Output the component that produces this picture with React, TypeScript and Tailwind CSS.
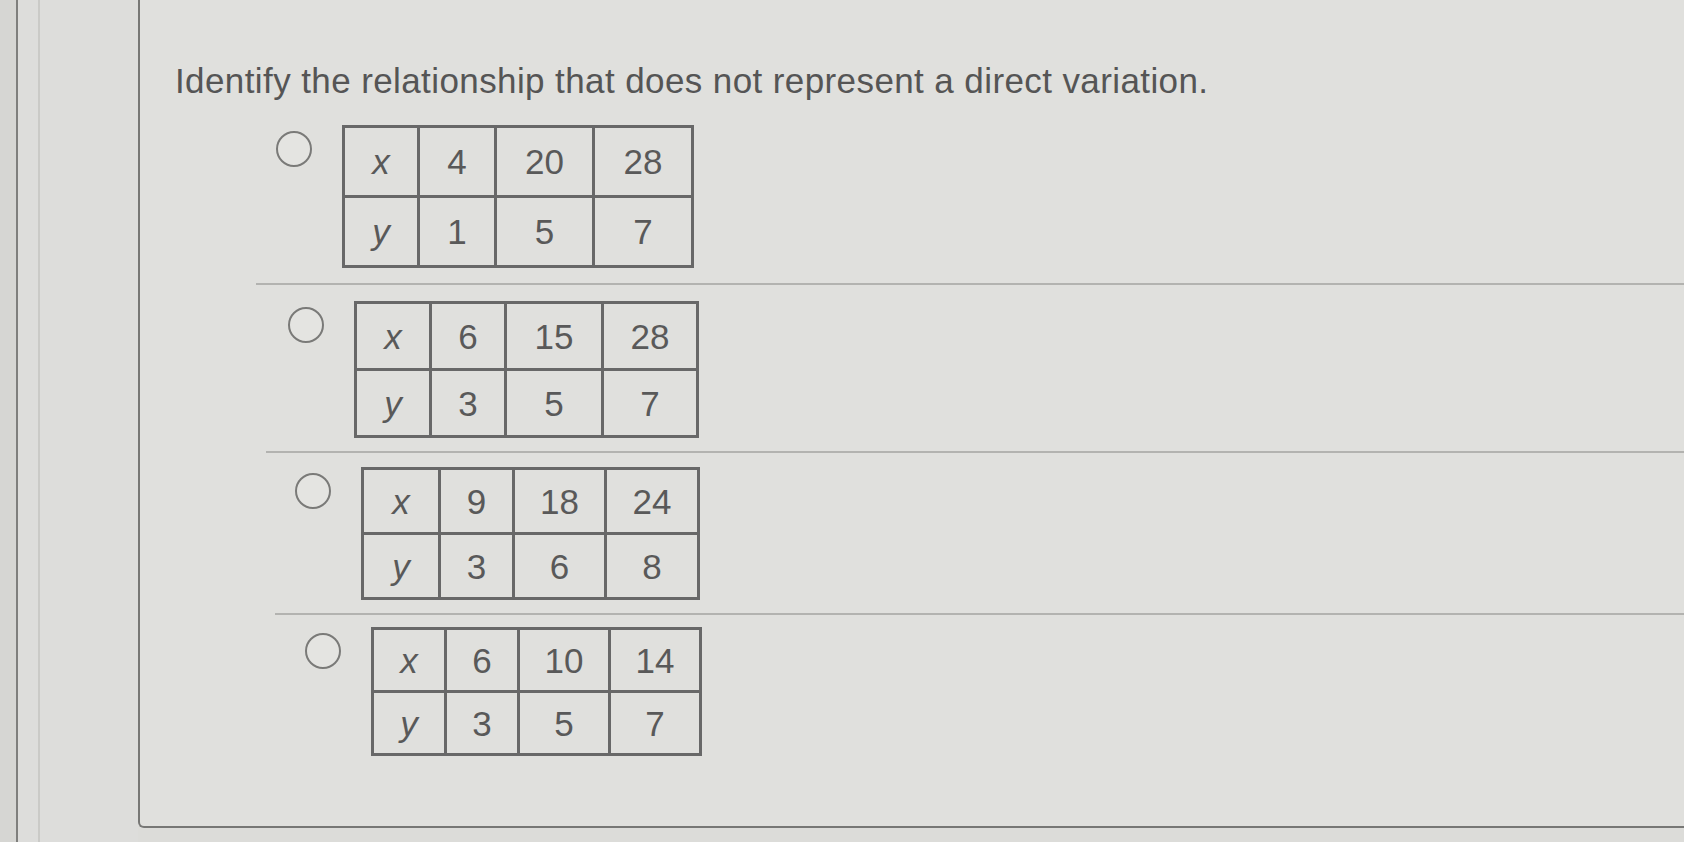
const options = [
  {
    xs: ['4', '20', '28'],
    ys: ['1', '5', '7'],
    wrap: 'ml-[116px] border-b-2 pt-[16px] pb-[15px]',
    pad: 'pl-[20px]',
    cols: [75, 77, 98, 99],
    rowH: 70,
  },
  {
    xs: ['6', '15', '28'],
    ys: ['3', '5', '7'],
    wrap: 'ml-[126px] border-b-2 pt-[16px] pb-[13px]',
    pad: 'pl-[22px]',
    cols: [75, 75, 97, 95],
    rowH: 67,
  },
  {
    xs: ['9', '18', '24'],
    ys: ['3', '6', '8'],
    wrap: 'ml-[135px] border-b-2 pt-[14px] pb-[13px]',
    pad: 'pl-[20px]',
    cols: [77, 74, 92, 93],
    rowH: 65,
  },
  {
    xs: ['6', '10', '14'],
    ys: ['3', '5', '7'],
    wrap: 'ml-[135px] pt-[12px]',
    pad: 'pl-[30px]',
    cols: [73, 73, 91, 91],
    rowH: 63,
  },
]

function ValueTable({ xs, ys, cols, rowH }: { xs: string[]; ys: string[]; cols: number[]; rowH: number }) {
  const rows = [
    ['x', ...xs],
    ['y', ...ys],
  ]
  return (
    <table className="border-collapse border-[3px] border-[#686868] text-[35px] text-[#595959]">
      <tbody>
        {rows.map((row, r) => (
          <tr key={r} style={{ height: rowH }}>
            {row.map((cell, c) => (
              <td
                key={c}
                style={{ width: cols[c] }}
                className={`border-[3px] border-[#686868] p-0 text-center leading-none ${c === 0 ? 'italic' : ''}`}
              >
                {cell}
              </td>
            ))}
          </tr>
        ))}
      </tbody>
    </table>
  )
}

export default function App() {
  return (
    <div
      className="flex h-[842px] w-[1684px] overflow-hidden bg-[#dcdcd9]"
      style={{ fontFamily: '"Liberation Sans", Arial, sans-serif' }}
    >
      <div className="w-[18px] shrink-0 border-r-2 border-[#7f7f7d] bg-[#d6d6d3]" />
      <div className="w-[120px] shrink-0 bg-[#dddddb]">
        <div className="ml-[20px] h-full w-[2px] bg-[#cacac7]" />
      </div>
      <div className="flex h-[828px] flex-1 flex-col rounded-bl-md border-b-2 border-l-2 border-[#777775] bg-[#e0e0dd]">
        <h1 className="ml-[35px] mt-[61px] text-[35px] leading-[40px] tracking-[0.4px] font-normal text-[#555555]">
          Identify the relationship that does not represent a direct variation.
        </h1>
        <div className="mt-[8px] flex flex-col">
          {options.map((o, i) => (
            <div key={i} className={`${o.wrap} border-[#b3b3b0]`}>
              <div className={`flex items-start gap-[30px] ${o.pad}`}>
                <span className="mt-[6px] h-[36px] w-[36px] shrink-0 rounded-full border-2 border-[#7a7a78] bg-[#e4e4e1]" />
                <ValueTable xs={o.xs} ys={o.ys} cols={o.cols} rowH={o.rowH} />
              </div>
            </div>
          ))}
        </div>
      </div>
    </div>
  )
}
